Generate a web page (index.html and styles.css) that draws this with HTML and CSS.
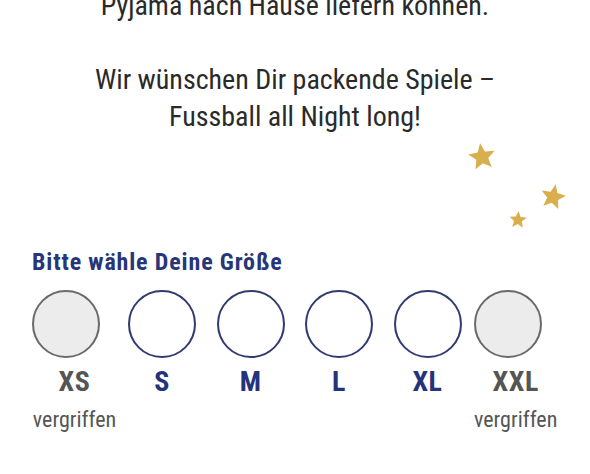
FILE: index.html
```html
<!DOCTYPE html>
<html lang="de">
<head>
    <meta charset="UTF-8">
    <meta name="viewport" content="width=device-width, initial-scale=1.0">
    <title>Pyjama – Grösse wählen</title>
    <link rel="stylesheet" href="styles.css">
</head>
<body>
    <div class="intro">
        <p class="intro-text first">Pyjama nach Hause liefern können.</p>
        <p class="intro-text">Wir wünschen Dir packende Spiele –<br>Fussball all Night long!</p>
    </div>

    <svg class="stars" width="590" height="113" viewBox="0 0 590 113">
        <defs>
            <polygon id="star" points="0,-1 0.265,-0.364 0.951,-0.309 0.428,0.139 0.588,0.809 0,0.45 -0.588,0.809 -0.428,0.139 -0.951,-0.309 -0.265,-0.364"></polygon>
        </defs>
        <use href="#star" fill="#d9af4d" transform="translate(482 22) rotate(-8) scale(14)"></use>
        <use href="#star" fill="#d9af4d" transform="translate(553 62) rotate(12) scale(13)"></use>
        <use href="#star" fill="#d9af4d" transform="translate(518 85) rotate(4) scale(9)"></use>
    </svg>

    <h2 class="size-title">Bitte wähle Deine Größe</h2>

    <div class="sizes">
        <div class="size sold-out first">
            <span class="circle"></span>
            <span class="size-label">XS</span>
            <span class="size-note">vergriffen</span>
        </div>
        <div class="size">
            <span class="circle"></span>
            <span class="size-label">S</span>
        </div>
        <div class="size">
            <span class="circle"></span>
            <span class="size-label">M</span>
        </div>
        <div class="size">
            <span class="circle"></span>
            <span class="size-label">L</span>
        </div>
        <div class="size">
            <span class="circle"></span>
            <span class="size-label">XL</span>
        </div>
        <div class="size sold-out last">
            <span class="circle"></span>
            <span class="size-label">XXL</span>
            <span class="size-note">vergriffen</span>
        </div>
    </div>
</body>
</html>
```

FILE: styles.css
```css
body {
    margin: 0;
    background-color: #ffffff;
    font-family: Roboto, "Liberation Sans", sans-serif;
    font-stretch: condensed;
    color: #2a2a2a;
    overflow: hidden;
}

.intro {
    text-align: center;
}

.intro-text {
    margin: 0;
    font-size: 28px;
    line-height: 37px;
}

.intro-text.first {
    margin-top: -13px;
    margin-bottom: 37px;
}

.stars {
    display: block;
}

.size-title {
    margin: 0;
    padding-left: 32px;
    font-size: 24px;
    line-height: 28px;
    font-weight: 700;
    letter-spacing: 0.85px;
    color: #283679;
}

/* size picker */
.sizes {
    display: flex;
    margin-top: 14px;
    padding-left: 32px;
    gap: 20.5px;
}

.size {
    display: flex;
    flex-direction: column;
    align-items: flex-start;
    text-align: center;
}

.size.first {
    min-width: 85px;
    margin-right: -9.5px;
}

.size.last {
    margin-left: -8px;
}

.circle {
    display: block;
    width: 68px;
    height: 68px;
    box-sizing: border-box;
    border: 2px solid #303b70;
    border-radius: 50%;
    background-color: #ffffff;
}

.size-label {
    display: block;
    align-self: stretch;
    margin-top: 8px;
    font-size: 28px;
    line-height: 32px;
    font-weight: 700;
    letter-spacing: 0.5px;
    color: #25347a;
}

.size-note {
    display: block;
    align-self: stretch;
    margin-top: 9px;
    font-size: 22px;
    line-height: 26px;
    color: #555555;
}

.sold-out .circle {
    border-color: #6a6a6a;
    background-color: #ececec;
}

.sold-out .size-label {
    color: #555555;
}
```
